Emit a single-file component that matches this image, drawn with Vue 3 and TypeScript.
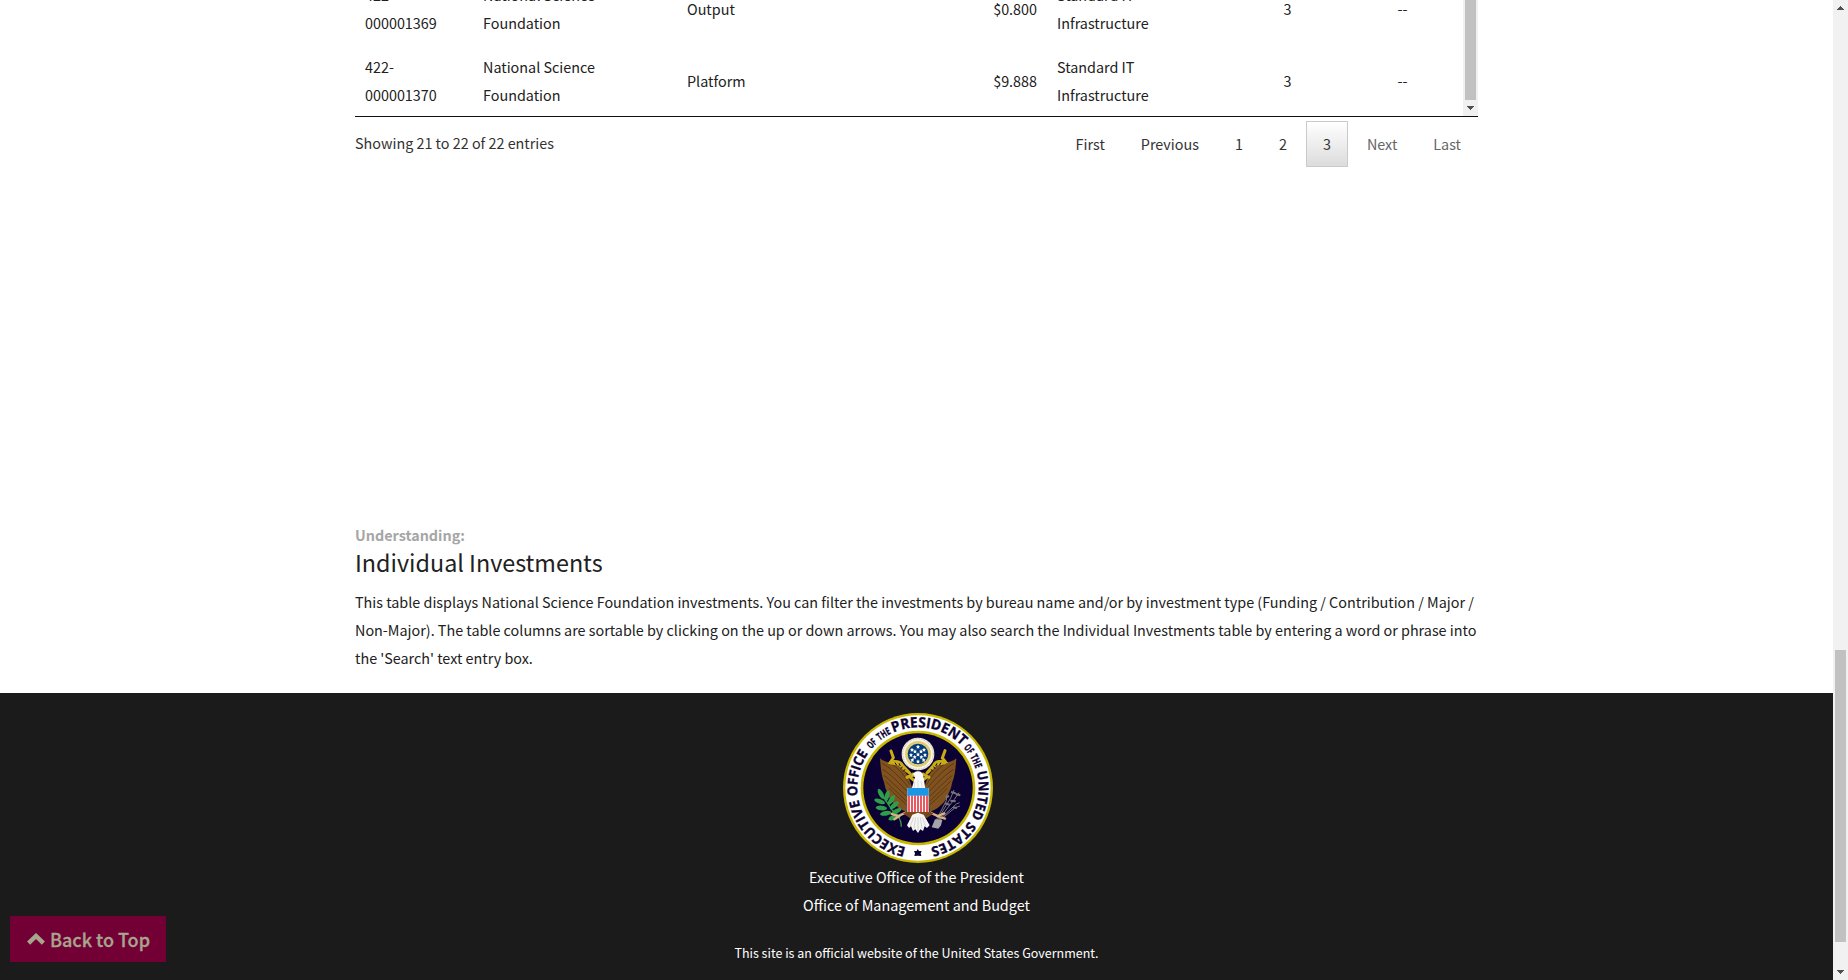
<script setup lang="ts">
interface Investment {
  uii: [string, string]
  agency: [string, string]
  type: string
  amount: string
  category: [string, string]
  rating: string
  status: string
}

const investments: Investment[] = [
  {
    uii: ['422-', '000001369'],
    agency: ['National Science', 'Foundation'],
    type: 'Output',
    amount: '$0.800',
    category: ['Standard IT', 'Infrastructure'],
    rating: '3',
    status: '--',
  },
  {
    uii: ['422-', '000001370'],
    agency: ['National Science', 'Foundation'],
    type: 'Platform',
    amount: '$9.888',
    category: ['Standard IT', 'Infrastructure'],
    rating: '3',
    status: '--',
  },
]

interface PageLink {
  label: string
  state: '' | 'current' | 'disabled'
}

const pages: PageLink[] = [
  { label: 'First', state: '' },
  { label: 'Previous', state: '' },
  { label: '1', state: '' },
  { label: '2', state: '' },
  { label: '3', state: 'current' },
  { label: 'Next', state: 'disabled' },
  { label: 'Last', state: 'disabled' },
]

// Words around the seal: start and end angles are degrees clockwise from the bottom.
const RING = 2 * Math.PI * 182
const arc = (degrees: number): number => (degrees / 360) * RING

const words = [
  { text: 'EXECUTIVE', from: 11.5, to: 79, size: 41 },
  { text: 'OFFICE', from: 82.5, to: 125, size: 41 },
  { text: 'OF', from: 129.5, to: 138, size: 31 },
  { text: 'THE', from: 141, to: 154, size: 31 },
  { text: 'PRESIDENT', from: 156, to: 226, size: 43 },
  { text: 'OF', from: 228.5, to: 236.5, size: 31 },
  { text: 'THE', from: 239, to: 251.5, size: 31 },
  { text: 'UNITED', from: 254.5, to: 299, size: 41 },
  { text: 'STATES', from: 303, to: 348, size: 41 },
]

const stars = [
  [263, 140], [245, 149], [281, 149], [254, 154], [272, 154], [263, 163],
  [242, 165], [284, 165], [253, 171], [273, 171], [246, 180], [280, 180], [263, 184],
]
const stripes = [236, 245, 254, 263, 272, 281, 290]
const leaves = [
  [152, 282, 62], [170, 288, 105], [148, 304, 20], [183, 300, 125], [153, 324, 5],
  [192, 316, 140], [166, 340, -10], [198, 334, 150], [190, 352, -25],
]
</script>

<template>
  <div class="window">
    <div class="page">
      <main class="content">
        <div class="table-scroll">
          <div class="rows">
            <div v-for="row in investments" :key="row.uii[1]" class="row">
              <div class="cell">{{ row.uii[0] }}<br />{{ row.uii[1] }}</div>
              <div class="cell">{{ row.agency[0] }}<br />{{ row.agency[1] }}</div>
              <div class="cell">{{ row.type }}</div>
              <div class="cell right">{{ row.amount }}</div>
              <div class="cell">{{ row.category[0] }}<br />{{ row.category[1] }}</div>
              <div class="cell center">{{ row.rating }}</div>
              <div class="cell center">{{ row.status }}</div>
            </div>
          </div>
          <div class="inner-bar">
            <div class="inner-thumb"></div>
            <svg class="bar-arrow" width="15" height="16" viewBox="0 0 15 16"><path d="M4 6h7v1h-1v1h-1v1H8v1H7V9H6V8H5V7H4z" fill="#505050" /></svg>
          </div>
        </div>
        <div class="table-footer">
          <div class="info">Showing 21 to 22 of 22 entries</div>
          <nav class="pager">
            <a v-for="p in pages" :key="p.label" class="page-link" :class="p.state">{{ p.label }}</a>
          </nav>
        </div>
        <section class="understanding">
          <div class="kicker">Understanding:</div>
          <h2 class="title">Individual Investments</h2>
          <p class="text">
            This table displays National Science Foundation investments. You can filter the investments by bureau name and/or by investment type (Funding / Contribution / Major /<br />
            Non-Major). The table columns are sortable by clicking on the up or down arrows. You may also search the Individual Investments table by entering a word or phrase into<br />
            the 'Search' text entry box.
          </p>
        </section>
      </main>

      <footer class="footer">
        <svg class="seal" viewBox="38 39 450 450" width="150" height="150">
          <defs>
            <path id="ring" d="M263 446a182 182 0 0 1 0-364a182 182 0 0 1 0 364" />
          </defs>
          <circle cx="263" cy="264" r="225" fill="#c9b800" />
          <circle cx="263" cy="264" r="218" fill="#fff" />
          <circle cx="263" cy="264" r="172" fill="#c9b800" />
          <circle cx="263" cy="264" r="164" fill="#0b0233" />
          <g class="ring-text">
            <text v-for="w in words" :key="w.from" :font-size="w.size" :textLength="arc(w.to - w.from)" lengthAdjust="spacingAndGlyphs">
              <textPath href="#ring" :startOffset="arc(w.from)" :textLength="arc(w.to - w.from)" lengthAdjust="spacingAndGlyphs">{{ w.text }}</textPath>
            </text>
          </g>
          <path d="M262 447l4 6 8 0-3 7 2 8-11-1-10 1 2-8-3-7 8 0z" fill="#0b0233" />

          <!-- wings -->
          <path d="M149 175q12 11 31 12q26 5 40 22q14 16 20 38l6 18-14 14-2 56q-20-4-34-19-18-14-24-36-8-14-11-34-9-20-12-71z" fill="#80521f" />
          <path d="M378 175q-12 11-31 12q-26 5-40 22q-14 16-20 38l-6 18 14 14 2 56q20-4 34-19 18-14 24-36 8-14 11-34 9-20 12-71z" fill="#80521f" />
          <g fill="none" stroke="#53330f" stroke-width="2.5">
            <path d="M156 190q28 14 77 70M156 208q20 8 74 66M161 226q16 12 68 64M166 244q16 16 63 60M176 264q12 14 52 50M184 192q32 20 54 62" />
            <path d="M371 190q-28 14-77 70M371 208q-20 8-74 66M366 226q-16 12-68 64M361 244q-16 16-63 60M351 264q-12 14-52 50M343 192q-32 20-54 62" />
          </g>

          <!-- scroll ribbon -->
          <g fill="none" stroke="#c8ad17" stroke-linecap="round">
            <path d="M182 153l7 20-8 13q28-5 35 10l22 23M344 152l-8 22 8 10q-30-3-34 12l-20 23" stroke-width="9" />
            <path d="M180 188l27 5 26 23M344 188l-27 5-24 23M248 222l-18 10M278 222l18 10M240 232l12 10M288 232l-12 10" stroke-width="9" />
          </g>
          <path d="M194 188l5 8M206 190l4 8M216 200l-4 6M224 208l-5 6M332 188l-5 8M320 190l-4 8M310 200l4 6M302 208l5 6" stroke="#0b0233" stroke-width="3" />

          <!-- glory with its constellation -->
          <circle cx="263" cy="162" r="49" fill="#f7f4e4" />
          <circle cx="263" cy="162" r="46" fill="none" stroke="#b8b8b4" stroke-width="4" stroke-dasharray="2 3" />
          <circle cx="263" cy="162" r="39" fill="#dfcc77" />
          <circle cx="263" cy="162" r="31" fill="#063b78" />
          <path v-for="s in stars" :key="s.join()" :d="`M${s[0]} ${s[1] - 6}l2 4h4l-3 3 1 5-4-2-4 2 1-5-3-3h4z`" fill="#fff" />

          <!-- branch and arrows -->
          <path d="M213 380q0-30-28-50l-28-44" fill="none" stroke="#3c9a4c" stroke-width="4" />
          <ellipse v-for="l in leaves" :key="l.join()" :cx="l[0]" :cy="l[1]" rx="17" ry="7" :transform="`rotate(${l[2]} ${l[0]} ${l[1]})`" fill="#2f9e4a" />
          <g stroke="#77777b" stroke-width="3" fill="none">
            <path d="M318 360l30-58 2-18M321 360l40-66 10-24M324 360l48-62 14-20M324 362l54-50 10-4M327 362l46-38 16-6" />
            <path d="M346 292l10-4M362 276l14 4M376 282l14 4M344 310l14 4M360 302l16 2M368 322l12 2" stroke-width="6" />
          </g>
          <path d="M314 358l22 2-4 16 -8 10-20-4z" fill="#a4a4aa" />

          <!-- legs and tail -->
          <path d="M226 338l-22 10-20-6M300 338l22 10 20-8M208 348l-16 10M320 348l24 8" fill="none" stroke="#d8b282" stroke-width="7" stroke-linecap="round" />
          <path d="M218 340l24-10h42l26 10-20 14-26-6-26 6z" fill="#75471a" />
          <path d="M246 344l17-6 17 6 18 32-8 8-7-5-5 14-8-5-7 11-8-11-7 5-6-14-6 5-6-8z" fill="#f5f5f3" />
          <path d="M250 352l-10 26M256 352l-5 34M263 352v40M270 352l5 34M276 352l10 26" stroke="#c4c4c4" stroke-width="2" />

          <!-- head and shield -->
          <path d="M244 266l10-34-8-7 4-6q6-7 14-5q12 0 15 14l6 38z" fill="#fafafa" />
          <path d="M248 222l-6 10 12-3z" fill="#d9bf27" />
          <path d="M254 245l-3 18M263 240v23M272 243l4 20" stroke="#cfcfcf" stroke-width="2" />
          <path d="M231 264h64v72h-64z" fill="#fff" />
          <path v-for="x in stripes" :key="x" :d="`M${x} 286v50`" stroke="#e3202c" stroke-width="4.5" />
          <path d="M231 264h64v23h-64z" fill="#1b95e5" />
        </svg>
        <div class="office">Executive Office of the President</div>
        <div class="office">Office of Management and Budget</div>
        <div class="official">This site is an official website of the United States Government.</div>
      </footer>
    </div>

    <div class="page-bar">
      <svg class="bar-arrow" width="15" height="16" viewBox="0 0 15 16"><path d="M7 6h1v1h1v1h1v1h1v1H4V9h1V8h1V7h1z" fill="#505050" /></svg>
      <div class="page-thumb"></div>
      <svg class="bar-arrow" width="15" height="16" viewBox="0 0 15 16"><path d="M4 6h7v1h-1v1h-1v1H8v1H7V9H6V8H5V7H4z" fill="#505050" /></svg>
    </div>

    <a class="back-to-top">
      <svg class="chevron" width="18" height="12" viewBox="0 0 18 12"><path d="M1.6 10.2L9 3l7.400 7.200" fill="none" stroke="#a8a58d" stroke-width="4.4" /></svg>
      <span class="back-label">Back to Top</span>
    </a>
  </div>
</template>

<style>
html,
body {
  margin: 0;
  overflow: hidden;
}
</style>

<style scoped>
.window {
  position: relative;
  display: flex;
  width: 1848px;
  height: 980px;
  overflow: hidden;
  background: #fff;
  color: #212121;
  font-family: 'Source Sans Pro', 'Noto Sans CJK SC', sans-serif;
  font-size: 14.36px;
  line-height: 28px;
}
.page {
  display: flex;
  flex-direction: column;
  width: 1833px;
  height: 980px;
}
.content {
  width: 1123px;
  height: 693px;
  margin-left: 355px;
}
.table-scroll {
  display: flex;
  height: 116px;
  border-bottom: 1px solid #111;
  overflow: hidden;
}
.rows {
  display: flex;
  flex-direction: column;
  justify-content: flex-end;
  width: 1108px;
  height: 117px;
}
.row {
  display: grid;
  flex: none;
  grid-template-columns: 118px 204px 190px 180px 180px 121px 109px;
  align-items: center;
  height: 72px;
}
.cell {
  padding: 0 10px;
  white-space: nowrap;
}
.right {
  text-align: right;
}
.center {
  text-align: center;
}
.inner-bar {
  display: flex;
  flex-direction: column;
  width: 15px;
  height: 116px;
  background: #f1f1f1;
}
.inner-thumb {
  height: 100px;
  margin: 0 2px;
  background: #c1c1c1;
}
.bar-arrow {
  display: block;
  flex: none;
}
.table-footer {
  display: flex;
  justify-content: space-between;
  padding-top: 4px;
  color: #333;
}
.info {
  padding-top: 8px;
}
.pager {
  display: flex;
  gap: 2px;
}
.page-link {
  padding: 8px 16px;
  border: 1px solid transparent;
}
.current {
  border-color: #cacaca;
  background: linear-gradient(#fff, #dcdcdc);
}
.disabled {
  color: #666;
}
.understanding {
  padding-top: 354px;
}
.kicker {
  color: #a6a6a6;
  font-weight: 700;
}
.title {
  margin: -1px 0 0;
  font-size: 23.34px;
  font-weight: 400;
  line-height: 28px;
}
.text {
  margin: 12px 0 0;
  white-space: nowrap;
}
.footer {
  display: flex;
  flex-direction: column;
  align-items: center;
  height: 267px;
  padding-top: 20px;
  background: #1b1b1b;
  color: #fff;
}
.seal {
  flex: none;
  margin-left: 2px;
}
.ring-text {
  fill: #0b0233;
  stroke: #0b0233;
  stroke-width: 1;
  font-family: 'Open Sans', 'Noto Sans', sans-serif;
  font-weight: 700;
}
.official {
  margin-top: 20px;
  font-size: 12.5px;
}
.page-bar {
  display: flex;
  flex-direction: column;
  width: 15px;
  height: 980px;
  background: #f1f1f1;
}
.page-thumb {
  height: 292px;
  margin: 634px 2px 22px;
  background: #c1c1c1;
}
.back-to-top {
  position: absolute;
  top: 916px;
  left: 10px;
  display: flex;
  align-items: center;
  gap: 5px;
  box-sizing: border-box;
  width: 156px;
  height: 46px;
  padding-left: 17px;
  background: #720035;
  color: #a8a58d;
  font-size: 18px;
  font-weight: 500;
  white-space: nowrap;
}
.back-label {
  -webkit-text-stroke: 0.3px #a8a58d;
}
</style>
